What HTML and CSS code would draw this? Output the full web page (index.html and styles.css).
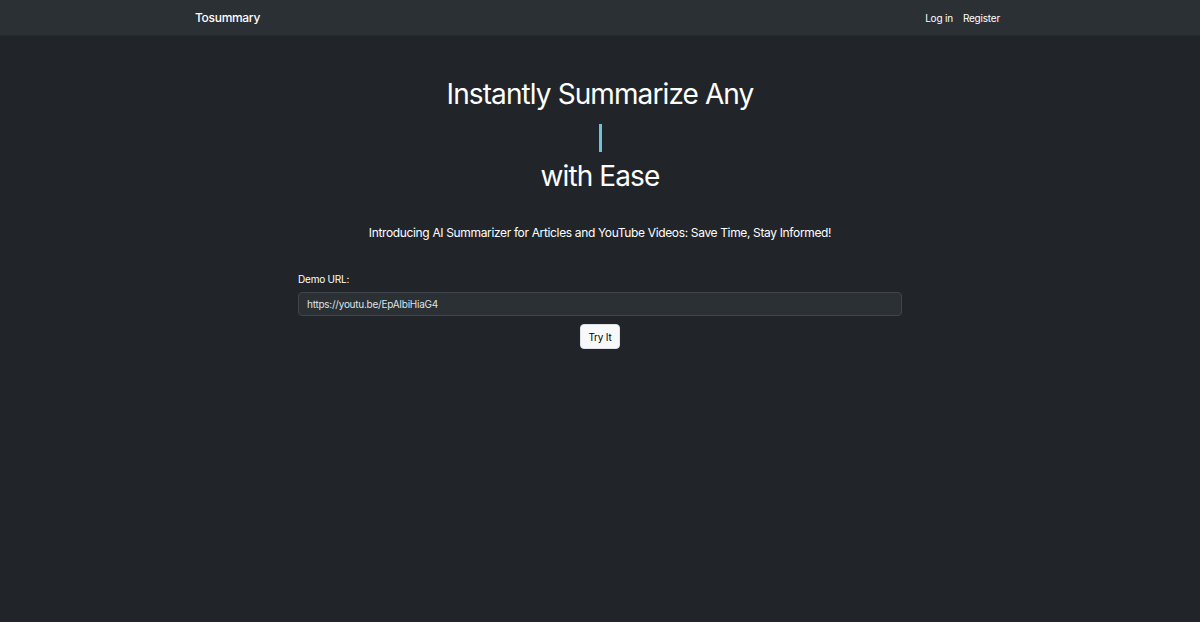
FILE: index.html
```html
<!DOCTYPE html>
<html lang="en">
<head>
<meta charset="utf-8">
<title>Tosummary</title>
<link rel="stylesheet" href="styles.css">
</head>
<body>
<header class="navbar">
  <div class="nav-inner">
    <a class="brand" href="#">Tosummary</a>
    <nav class="nav-links">
      <a href="#">Log in</a>
      <a href="#">Register</a>
    </nav>
  </div>
</header>
<main class="hero">
  <h1 class="title">
    <span class="line">Instantly Summarize Any</span>
    <span class="line"><span class="cursor"></span></span>
    <span class="line">with Ease</span>
  </h1>
  <p class="lead">Introducing AI Summarizer for Articles and YouTube Videos: Save Time, Stay Informed!</p>
  <form class="demo">
    <label class="label" for="url">Demo URL:</label>
    <input class="input" id="url" type="text" value="https://youtu.be/EpAIbiHiaG4">
    <div class="actions"><button class="btn" type="button">Try It</button></div>
  </form>
</main>
</body>
</html>
```
FILE: styles.css
```css
* { box-sizing: border-box; }
html, body { margin: 0; padding: 0; }
body {
  background: #212529;
  color: #fff;
  font-family: Inter, "Helvetica Neue", Arial, sans-serif;
  height: 622px;
}
.navbar {
  background: #2b3035;
  height: 35px;
  box-shadow: 0 1px 0 #262a2f;
}
.nav-inner {
  width: 810px;
  margin: 0 auto;
  height: 100%;
  display: flex;
  align-items: center;
  justify-content: space-between;
  padding-right: 5px;
}
.brand {
  color: #fff;
  text-decoration: none;
  font-size: 12px;
  font-weight: 500;
  letter-spacing: -0.3px;
}
.nav-links { display: flex; gap: 10px; }
.nav-links a {
  color: #fff;
  text-decoration: none;
  font-size: 10px;
  letter-spacing: -0.2px;
}
.hero {
  display: flex;
  flex-direction: column;
  align-items: center;
}
.title {
  margin: 39px 0 0;
  font-weight: 400;
  font-size: 28px;
  letter-spacing: -0.9px;
  display: flex;
  flex-direction: column;
  align-items: center;
  line-height: 41px;
}
.line { display: block; height: 41px; }
.cursor {
  display: inline-block;
  width: 3px;
  height: 28px;
  background: #6cc3dc;
  vertical-align: middle;
  margin-top: 1px;
}
.lead {
  margin: 27px 0 0;
  font-size: 12px;
  line-height: 18px;
  letter-spacing: -0.35px;
}
.demo {
  width: 604px;
  margin-top: 30px;
  display: flex;
  flex-direction: column;
}
.label {
  font-size: 10px;
  line-height: 14px;
  letter-spacing: -0.2px;
  margin-bottom: 6px;
}
.input {
  height: 24px;
  background: #2b3035;
  border: 1px solid #3f454b;
  border-radius: 4px;
  color: #dee2e6;
  font-family: inherit;
  font-size: 10px;
  letter-spacing: -0.25px;
  padding: 0 8px;
  outline: none;
}
.actions {
  display: flex;
  justify-content: center;
  margin-top: 8px;
}
.btn {
  background: #f8f9fa;
  color: #000;
  border: 1px solid #dee2e6;
  border-radius: 4px;
  font-family: inherit;
  font-size: 10px;
  letter-spacing: -0.2px;
  height: 25px;
  width: 40px;
  padding: 0;
}
```
